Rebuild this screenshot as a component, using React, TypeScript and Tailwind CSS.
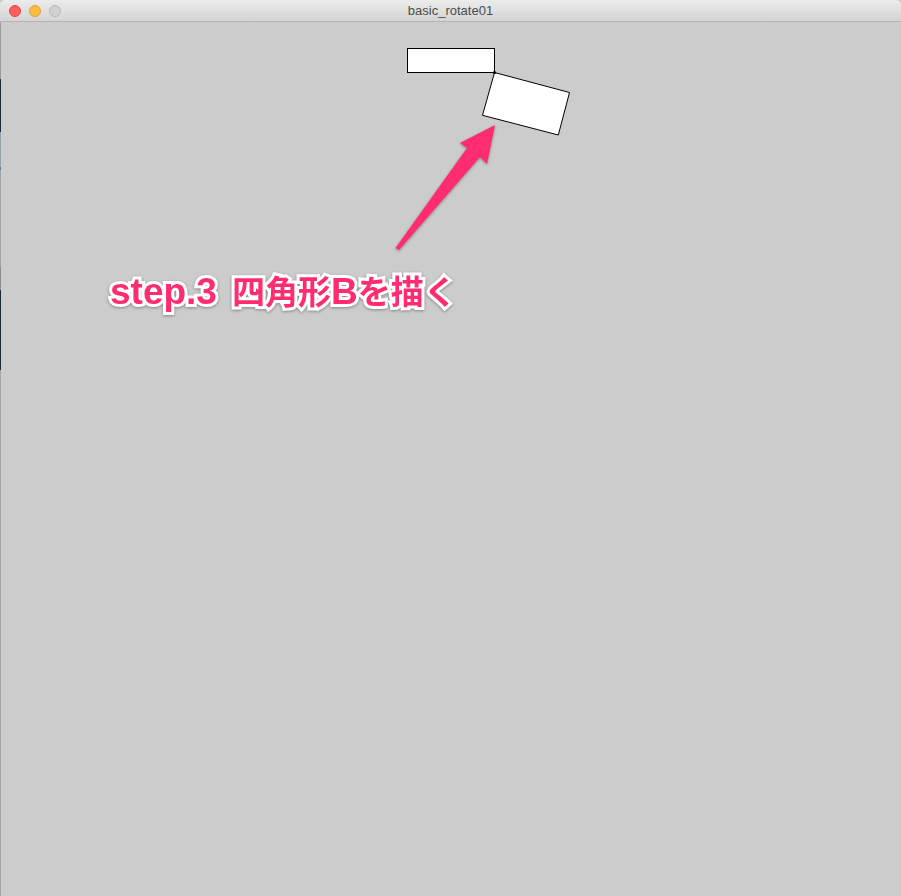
const edge = [
  { h: "h-[57px]", c: "bg-[#9c9c9c]" },
  { h: "h-[53px]", c: "bg-[#1c2a3a]" },
  { h: "h-[30px]", c: "bg-[#8fa3a8]" },
  { h: "h-[5px]", c: "bg-[#a0a0a0]" },
  { h: "h-[3px]", c: "bg-[#4a7fa8]" },
  { h: "h-[97px]", c: "bg-[#a4a4a4]" },
  { h: "h-[23px]", c: "bg-[#8c8c8c]" },
  { h: "h-[80px]", c: "bg-[#1c2a3a]" },
  { h: "flex-1", c: "bg-[#a4a4a4]" },
];

const TrafficLight = ({ fill, ring }: { fill: string; ring: string }) => (
  <span className={`block w-3 h-3 rounded-full border ${fill} ${ring}`} />
);

export default function App() {
  return (
    <div className="w-[901px] h-[896px] flex flex-col overflow-hidden bg-[#cccccc] font-['Liberation_Sans',Arial,sans-serif]">
      <header className="relative h-[22px] shrink-0 flex items-center rounded-t-[5px] border-b border-[#b4b4b4] bg-gradient-to-b from-[#ececec] to-[#d4d4d4]">
        <div className="flex items-center gap-2 pl-[9px]">
          <TrafficLight fill="bg-[#fc605c]" ring="border-[#de4a45]" />
          <TrafficLight fill="bg-[#fdbc40]" ring="border-[#dea236]" />
          <TrafficLight fill="bg-[#d0d0d0]" ring="border-[#b9b9b9]" />
        </div>
        <span className="absolute inset-x-0 text-center text-[13px] leading-none text-[#4b4b4b]">
          basic_rotate01
        </span>
      </header>

      <main className="relative flex-1 flex">
        <div className="w-px flex flex-col">
          {edge.map((s, i) => (
            <span key={i} className={`block w-px ${s.h} ${s.c}`} />
          ))}
        </div>
        <div className="flex-1" />

        {/* sketch output */}
        <svg className="absolute left-0 top-0" width="901" height="874" viewBox="0 22 901 874">
          <rect x="407.5" y="48.5" width="87" height="24" fill="#fff" stroke="#000" strokeWidth="1" />
          <polygon
            points="494.5,72.5 569.5,92.5 558.3,135 482.5,115.3"
            fill="#fff"
            stroke="#000"
            strokeWidth="1"
          />
          <circle cx="494.5" cy="72.5" r="1.6" fill="#000" />

          <g style={{ filter: "drop-shadow(0 1px 1.5px rgba(0,0,0,0.35))" }}>
            <polygon
              points="495,125 487,164 480,157 399,250 395.5,248 467,148 460,143"
              fill="#ff2d6f"
            />
          </g>
        </svg>

        <div className="absolute left-[110px] top-[251px] flex items-baseline text-[#ff2d6f] font-bold leading-none [-webkit-text-stroke:6px_#fff] [paint-order:stroke_fill] [filter:drop-shadow(0_1px_1.5px_rgba(0,0,0,0.35))]">
          <span className="text-[37px] font-['Liberation_Sans',Arial,sans-serif]">step.3</span>
          <span className="text-[33px] ml-[15px] font-['Noto_Sans_CJK_JP','Liberation_Sans',sans-serif]">
            四角形
          </span>
          <span className="text-[37px] font-['Liberation_Sans',Arial,sans-serif]">B</span>
          <span className="text-[33px] font-['Noto_Sans_CJK_JP',sans-serif]">を描く</span>
        </div>
      </main>
    </div>
  );
}
